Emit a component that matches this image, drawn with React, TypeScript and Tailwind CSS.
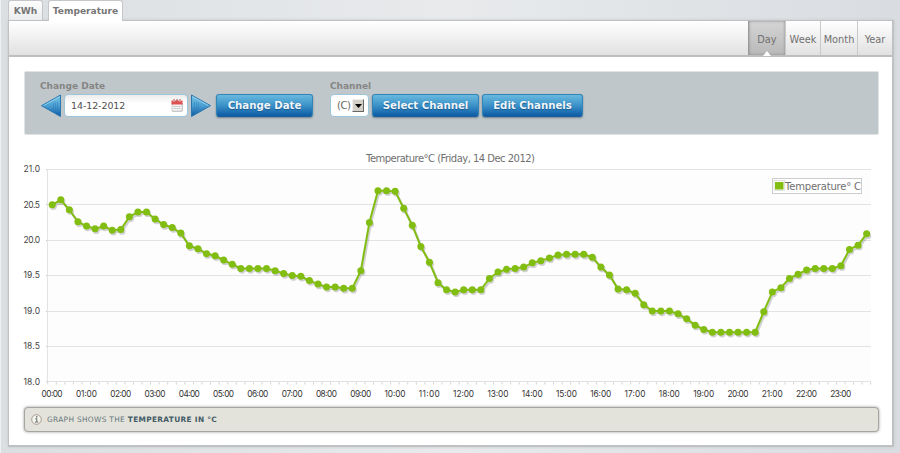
import clsx from "clsx";

const tabs = ["KWh", "Temperature"];

const periods = [
  { label: "Day", width: "w-[37px]" },
  { label: "Week", width: "w-[35px]" },
  { label: "Month", width: "w-[37px]" },
  { label: "Year", width: "w-[35px]" },
];

// one reading every 15 minutes
const readings = [
  20.5, 20.57, 20.43, 20.26, 20.2, 20.16, 20.2, 20.14, 20.15, 20.33, 20.4, 20.4,
  20.3, 20.22, 20.18, 20.1, 19.92, 19.88, 19.81, 19.78, 19.72, 19.66, 19.6, 19.6,
  19.6, 19.6, 19.57, 19.53, 19.5, 19.49, 19.43, 19.38, 19.34, 19.34, 19.32, 19.32,
  19.57, 20.25, 20.7, 20.7, 20.69, 20.45, 20.21, 19.91, 19.69, 19.4, 19.3, 19.27,
  19.3, 19.3, 19.3, 19.46, 19.55, 19.59, 19.6, 19.62, 19.68, 19.71, 19.75, 19.79,
  19.8, 19.8, 19.8, 19.76, 19.62, 19.51, 19.31, 19.3, 19.25, 19.09, 19.0, 19.0,
  19.0, 18.96, 18.89, 18.8, 18.74, 18.7, 18.7, 18.7, 18.7, 18.7, 18.7, 18.99,
  19.27, 19.33, 19.46, 19.52, 19.58, 19.6, 19.6, 19.6, 19.64, 19.87, 19.93, 20.09,
];

const STEP = 8.573;
const px = (i: number) => 43.2 + i * STEP;
const py = (v: number) => 34.4 + (21 - v) * 70.8;
const points = readings.map((v, i) => `${px(i)},${py(v)}`).join(" ");

const yTicks = [21, 20.5, 20, 19.5, 19, 18.5, 18];
const hours = Array.from({ length: 24 }, (_, h) => h);

function Arrow({ flip, className }: { flip?: boolean; className?: string }) {
  const id = flip ? "arrow-next" : "arrow-prev";
  return (
    <svg
      className={clsx("h-6 w-[22px] shrink-0", flip && "-scale-x-100", className)}
      viewBox="0 0 22 24"
    >
      <defs>
        <linearGradient id={id} x1="0" y1="0" x2="0" y2="1">
          <stop offset="0" stopColor="#7cc6e6" />
          <stop offset="0.5" stopColor="#4a9fd2" />
          <stop offset="1" stopColor="#0d58a2" />
        </linearGradient>
      </defs>
      <path d="M20.5 1v21.5L1.5 11.7z" fill={`url(#${id})`} stroke="#2878b2" strokeLinejoin="round" />
      <path d="M19.4 2.8 3.4 11.7" stroke="#9bd7f0" strokeWidth="0.8" />
      <path d="M13.5 9v6M15.5 8v8M17.5 8v8" stroke="#2578b7" strokeWidth="0.7" opacity="0.6" />
    </svg>
  );
}

function CalendarIcon() {
  return (
    <svg className="h-[13px] w-3" viewBox="0 0 12 13">
      <path d="M1 4h10.5v8.5H1z" fill="#aaa" />
      <path d="M1 4h10v8H1z" fill="#f4f4f4" stroke="#aaa" strokeWidth="0.5" />
      <path d="M.5 1.5h11v4H.5z" fill="#df5050" />
      <path d="M3 0v3M6 0v2M9 0v3" stroke="#a94848" />
      <path d="M3 1v2M9 1v2" stroke="#fff" strokeWidth="0.7" />
      <path d="M2.5 7.5h7M2.5 9.5h7" stroke="#b8b8b8" strokeDasharray="1.2 .7" />
    </svg>
  );
}

function Button({ children, className }: { children: string; className: string }) {
  return (
    <button
      className={clsx(
        "h-[23px] shrink-0 whitespace-nowrap rounded-[3px] border border-[#3485b7] border-b-[#1b5f9d] bg-linear-to-b from-[#67b9de] via-[#3b92c8] to-[#0c5ba5] pt-px text-[10.2px] leading-none font-bold text-white/95 shadow-[0_1px_2px_#6f8088] [text-shadow:0_1px_1px_#17598d]",
        className,
      )}
    >
      {children}
    </button>
  );
}

function Chart() {
  return (
    <svg className="block h-[270px] w-[883px]" viewBox="0 0 883 270">
      <text x="357" y="26.5" fontSize="10" textLength="169" fill="#707070">
        Temperature°C (Friday, 14 Dec 2012)
      </text>
      <rect x="39" y="34" width="823" height="213" fill="#fdfdfd" />
      {yTicks.map((t) => (
        <g key={t}>
          <path d={`M37.5 ${Math.floor(py(t)) + 0.5}H862`} stroke="#e3e3e3" />
          <path d={`M37 ${Math.floor(py(t)) + 0.5}h2`} stroke="#c8c8c8" />
          <text
            x="14.5"
            y={py(t) + 2.7}
            fontFamily="Inter, sans-serif"
            fontSize="8.5"
            textLength="16.5"
            fill="#444"
          >
            {t.toFixed(1)}
          </text>
        </g>
      ))}
      <path d="M38.5 34v213" stroke="#e3e3e3" />
      {Array.from({ length: 97 }, (_, i) => (
        <path key={i} d={`M${38.7 + i * STEP} 247v2.5`} stroke="#ccc" strokeWidth="0.8" />
      ))}
      {hours.map((h) => (
        <text
          key={h}
          x={px(h * 4) - 10.6}
          y="261.5"
          fontFamily="Inter, sans-serif"
          fontSize="8.3"
          textLength="21"
          fill="#333"
        >
          {String(h).padStart(2, "0")}:00
        </text>
      ))}
      <g transform="translate(1.2 1.8)" opacity="0.22">
        <polyline points={points} fill="none" stroke="#333" strokeWidth="2.4" />
        {readings.map((v, i) => (
          <circle key={i} cx={px(i)} cy={py(v)} r="3.4" fill="#333" />
        ))}
      </g>
      <polyline points={points} fill="none" stroke="#82bd12" strokeWidth="2" />
      {readings.map((v, i) => (
        <circle key={i} cx={px(i)} cy={py(v)} r="3.5" fill="#82bd12" />
      ))}
      <rect x="763.5" y="43.5" width="89" height="15" fill="#fff" stroke="#ccc" />
      <rect x="765" y="45.5" width="10.5" height="10" fill="#fff" stroke="#ccc" strokeWidth="0.6" />
      <rect x="766" y="47" width="8.5" height="7.5" fill="#82bd12" />
      <text x="776" y="55" fontSize="10" textLength="76" fill="#707070">
        Temperature° C
      </text>
    </svg>
  );
}

export default function App() {
  return (
    <div className="h-[453px] w-[900px] overflow-hidden bg-linear-to-r from-[#dcdfe2] via-[#e8eaec] to-[#d9dde1] font-['DejaVu_Sans',Verdana,sans-serif] text-[#777] shadow-[inset_1px_0_#eef0f1]">
      <div className="flex h-5 gap-[5px] pl-2">
        {tabs.map((tab, i) => (
          <div
            key={tab}
            className={clsx(
              "rounded-t-[3px] border border-b-0 border-[#c4c6c8] text-center text-[9.1px] leading-[20px] font-bold",
              i === 1
                ? "relative z-10 h-[21px] w-[75px] bg-white"
                : "h-5 w-[35px] bg-linear-to-b from-[#fdfdfd] to-[#ebeced]",
            )}
          >
            {tab}
          </div>
        ))}
      </div>

      <div className="ml-2 h-[427px] w-[886px] border border-r-2 border-b-2 border-[#bfc1c3] bg-white shadow-[0_0_3px_#c5c8ca]">
        <div className="flex h-[36px] justify-end border-b-2 border-[#bebebe] bg-linear-to-b from-white to-[#e1e1e1]">
          {periods.map(({ label, width }) => (
            <div
              key={label}
              className={clsx(
                "relative border-l text-center text-[9.8px] leading-[37px] text-[#707070]",
                width,
                label === "Day"
                  ? "border-[#999] bg-linear-to-b from-[#d5d5d5] to-[#b9b9b9] shadow-[inset_0_0_3px_#888]"
                  : "border-[#c9c9c9]",
              )}
            >
              {label}
              {label === "Day" && (
                <svg className="absolute -bottom-px left-[14px] h-[5px] w-2" viewBox="0 0 8 5">
                  <path d="M0 5 4 0l4 5z" fill="#fff" />
                </svg>
              )}
            </div>
          ))}
        </div>

        <div className="mt-[14px] ml-[15px] flex h-[64px] w-[855px] rounded-[2px] border border-[#e0e3e4] bg-[#c0c7ca] pt-2 pl-[15px]">
          <div className="w-[290px]">
            <div className="h-[14px] text-[9px] leading-[12px] font-bold text-[#858585]">
              Change Date
            </div>
            <div className="flex">
              <Arrow />
              <div className="ml-[2px] flex h-[23px] w-[124px] items-center justify-between rounded-[4px] border border-[#9bc6dc] bg-linear-to-b from-[#ececec] to-white to-40% pr-1 pl-[6px] text-[9.5px] text-[#505050]">
                <span className="pt-[2px] tracking-[-0.1px]">14-12-2012</span>
                <CalendarIcon />
              </div>
              <Arrow flip className="ml-[2px]" />
              <Button className="ml-[4px] w-[97px]">Change Date</Button>
            </div>
          </div>
          <div>
            <div className="h-[14px] text-[9px] leading-[12px] font-bold text-[#858585]">
              Channel
            </div>
            <div className="flex">
              <div className="flex h-[23px] w-[39px] items-center rounded-[4px] border border-[#9bc6dc] bg-white pl-[6px] text-[10px] text-[#666]">
                <span className="w-[15px] tracking-[-0.5px]">(C)</span>
                <span className="flex h-[13px] w-3 items-center justify-center border border-t-[#eee] border-r-[#666] border-b-[#666] border-l-[#eee] bg-[#d4d0c8]">
                  <svg className="h-1 w-[7px]" viewBox="0 0 7 4">
                    <path d="M0 0h7L3.5 4z" />
                  </svg>
                </span>
              </div>
              <Button className="ml-[3px] w-[107px]">Select Channel</Button>
              <Button className="ml-[3px] w-[101px]">Edit Channels</Button>
            </div>
          </div>
        </div>

        <Chart />

        <div className="mt-[2px] ml-[15px] flex h-[25px] w-[855px] items-center rounded-[4px] border border-[#a6a6a1] bg-[#e3e3db] pl-[6px] text-[7.4px] text-[#67777d] uppercase shadow-[0_0_3px_#999]">
          <svg className="mr-[5px] h-[11px] w-[11px]" viewBox="0 0 11 11" fill="none">
            <circle cx="5.5" cy="5.5" r="4.8" fill="#f5f5ef" stroke="#a59a90" />
            <path d="M4.3 4.7h1.5v3M4 8h3.3" stroke="#666" />
            <path d="M5 2.3h1.4v1.2H5z" fill="#555" />
          </svg>
          <span className="pt-px tracking-[0.33px]">
            Graph shows the <b className="text-[#435b67]">temperature in °C</b>
          </span>
        </div>
      </div>
    </div>
  );
}
